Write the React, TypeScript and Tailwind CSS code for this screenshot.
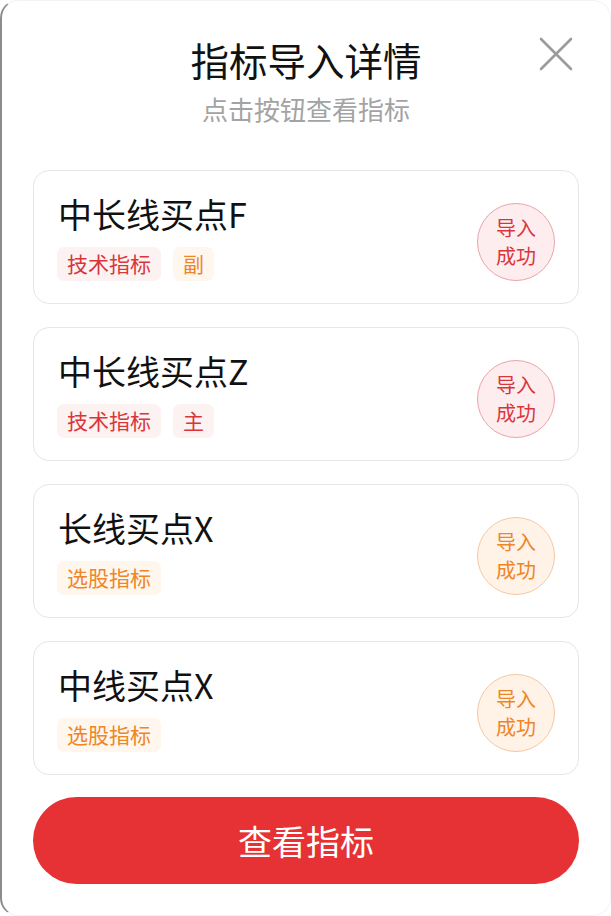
import React from 'react';

type Tag = { label: string; tone: 'red' | 'orange' };
type Item = { name: string; tags: Tag[]; tone: 'red' | 'orange' };

const items: Item[] = [
    { name: '中长线买点F', tags: [{ label: '技术指标', tone: 'red' }, { label: '副', tone: 'orange' }], tone: 'red' },
    { name: '中长线买点Z', tags: [{ label: '技术指标', tone: 'red' }, { label: '主', tone: 'red' }], tone: 'red' },
    { name: '长线买点X', tags: [{ label: '选股指标', tone: 'orange' }], tone: 'orange' },
    { name: '中线买点X', tags: [{ label: '选股指标', tone: 'orange' }], tone: 'orange' },
];

function TagChip({ tag }: { tag: Tag }) {
    const cls =
        tag.tone === 'red'
            ? 'bg-[#fdf2f2] text-[#d9363c]'
            : 'bg-[#fff6ee] text-[#ee8526]';
    return (
        <span className={`h-[34px] px-[10px] rounded-[7px] flex items-center text-[21px] leading-none ${cls}`}>
            {tag.label}
        </span>
    );
}

function StatusBadge({ tone }: { tone: 'red' | 'orange' }) {
    const cls =
        tone === 'red'
            ? 'bg-[#fdedef] border-[#eaa4a9] text-[#d9363c]'
            : 'bg-[#fff2e7] border-[#f6c7a0] text-[#ee8526]';
    return (
        <div className={`mt-[10px] w-[78px] h-[78px] rounded-full border flex flex-col items-center justify-center text-[20px] leading-[28px] ${cls}`}>
            <span>导入</span>
            <span>成功</span>
        </div>
    );
}

export default function App() {
    return (
        <div
            className="w-[611px] h-[916px] bg-white"
            style={{ fontFamily: '"Noto Sans CJK SC", "Noto Sans", sans-serif' }}
        >
            <div className="relative h-full rounded-[18px] border border-[#f3f3f3] border-l-2 border-l-[#8c8c8c] bg-white px-[31px] pt-[33px] flex flex-col">
                {/* Close button */}
                <svg className="absolute top-[36px] right-[37px]" width="34" height="34" viewBox="0 0 34 34" fill="none">
                    <path d="M2 2L32 32M32 2L2 32" stroke="#9b9b9b" strokeWidth="2.6" strokeLinecap="round" />
                </svg>

                {/* Header */}
                <div className="flex flex-col items-center">
                    <h1 className="text-[38.5px] leading-[50px] text-[#111] font-normal">指标导入详情</h1>
                    <p className="mt-[9px] text-[26px] leading-[32px] text-[#a3a3a3]">点击按钮查看指标</p>
                </div>

                {/* Indicator cards */}
                <div className="mt-[45px] flex flex-col gap-[23px]">
                    {items.map((item) => (
                        <div
                            key={item.name}
                            className="h-[134px] rounded-[16px] border border-[#e6e6e6] pl-[23px] pr-[23px] flex items-center justify-between"
                        >
                            <div className="flex flex-col">
                                <div className="text-[34px] leading-[40px] text-[#111] pl-[1px]">{item.name}</div>
                                <div className="mt-[13px] flex gap-[12px]">
                                    {item.tags.map((tag) => (
                                        <TagChip key={tag.label} tag={tag} />
                                    ))}
                                </div>
                            </div>
                            <StatusBadge tone={item.tone} />
                        </div>
                    ))}
                </div>

                {/* Submit */}
                <button className="mt-[22px] h-[87px] w-full rounded-full bg-[#e63234] text-white text-[34px]">
                    查看指标
                </button>
            </div>
        </div>
    );
}
